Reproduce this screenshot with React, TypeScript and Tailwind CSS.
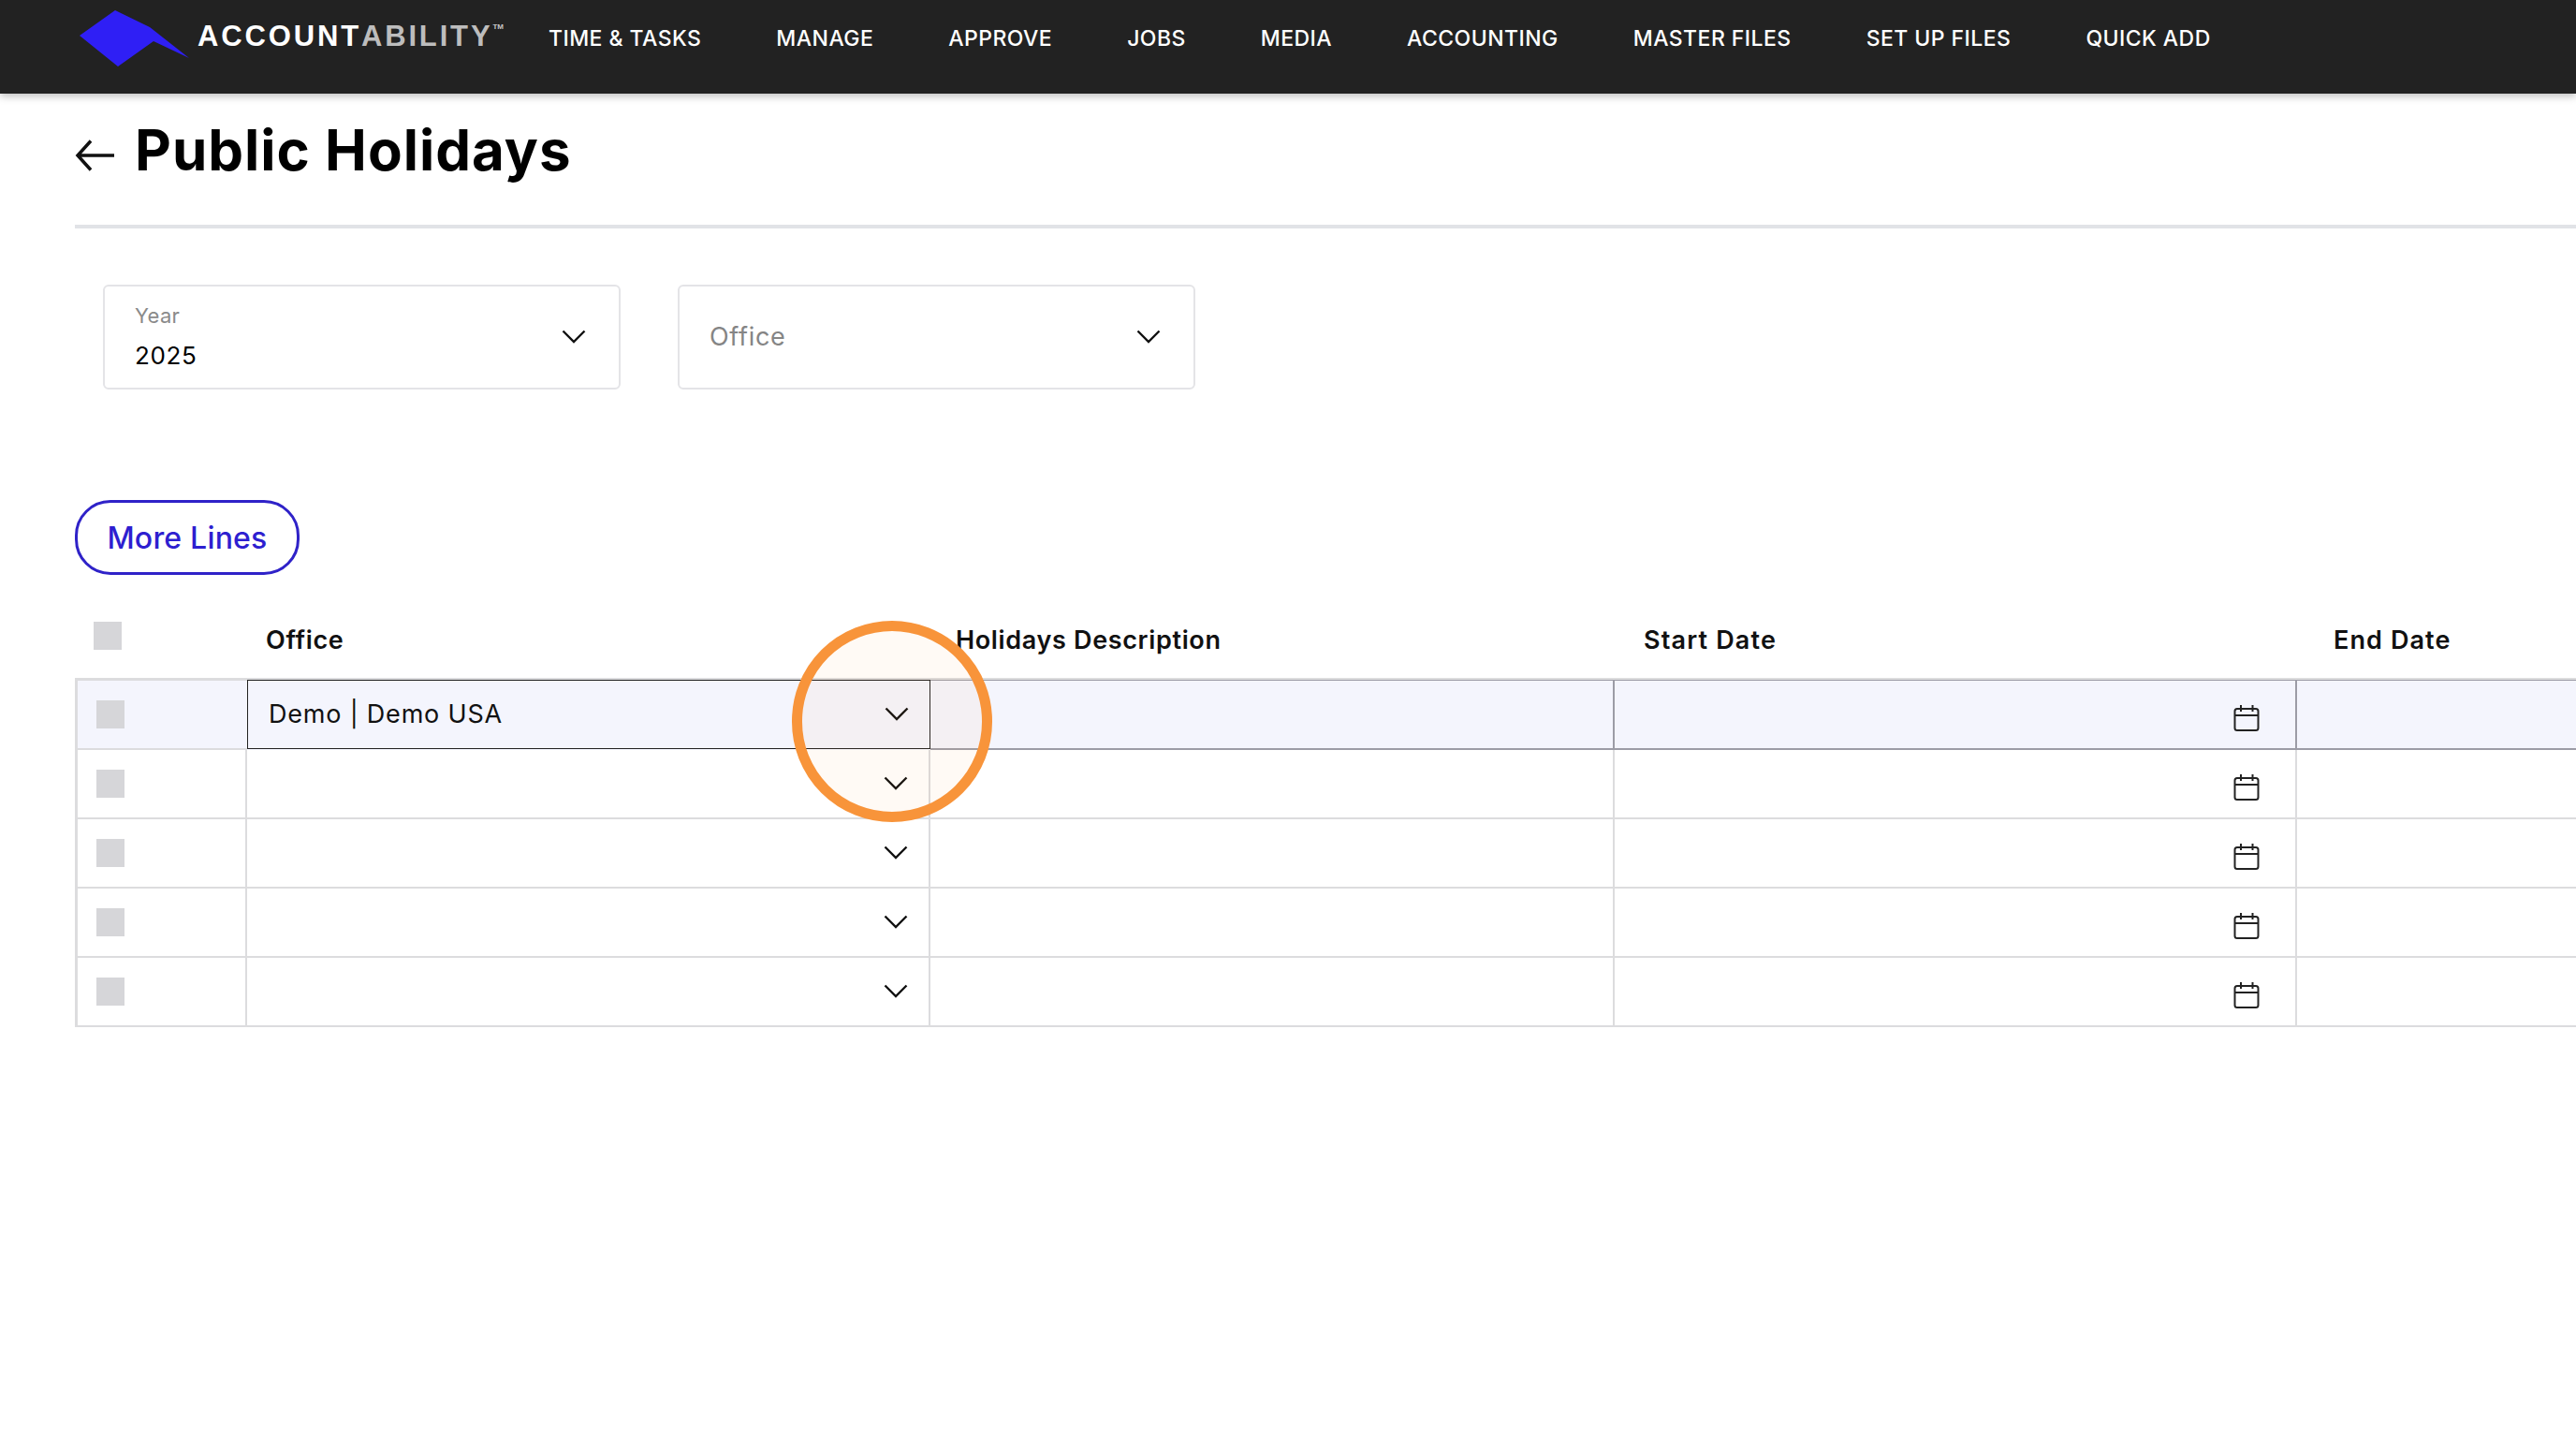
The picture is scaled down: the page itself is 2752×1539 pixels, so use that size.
const navItems = [
  "TIME & TASKS",
  "MANAGE",
  "APPROVE",
  "JOBS",
  "MEDIA",
  "ACCOUNTING",
  "MASTER FILES",
  "SET UP FILES",
  "QUICK ADD",
];

const rows = ["Demo | Demo USA", "", "", "", ""];

function Chevron() {
  return (
    <svg className="-translate-y-px" width="26" height="15" viewBox="0 0 26 15" fill="none" stroke="#111111" strokeWidth="2.4">
      <polyline points="1.5,1.5 13,13 24.5,1.5" />
    </svg>
  );
}

function CalendarIcon() {
  return (
    <svg className="mt-2" width="28" height="28" viewBox="0 0 28 28" fill="none" stroke="#222222" strokeWidth="2">
      <rect x="1.5" y="4" width="25" height="23" rx="2.5" />
      <path d="M1.5 11H26.5M8 0V7M20.500 0V7" />
    </svg>
  );
}

function Select({ label, value }: { label: string; value?: string }) {
  return (
    <div className="flex h-[112px] w-[553px] items-center justify-between rounded-md border-2 border-[#e4e4e7] pl-[32px] pr-[35px]">
      {value ? (
        <div className="-mt-[3px] flex flex-col">
          <span className="text-[22px] leading-[30px] tracking-[0.3px] text-[#8a8a8a]">{label}</span>
          <span className="mt-[12px] text-[26px] leading-[32px] tracking-[0.6px] text-black">{value}</span>
        </div>
      ) : (
        <span className="text-[27px] tracking-[0.7px] text-[#858585]">{label}</span>
      )}
      <Chevron />
    </div>
  );
}

function ActiveRow({ office }: { office: string }) {
  return (
    <div className="grid h-[75px] grid-cols-[181px_730px_731px_729px_400px] bg-[#f4f5fd]">
      <div className="flex items-center border-t border-b-2 border-t-[#dcdcde] border-b-[#dcdcde] pl-[20px]">
        <div className="h-[30px] w-[30px] bg-[#d6d6d9]" />
      </div>
      <div className="mb-px flex items-center justify-between border border-[#222222] pl-[22px] pr-[22px] text-[27px] tracking-[0.8px] text-[#111111]">
        <span>{office}</span>
        <Chevron />
      </div>
      <div className="border-t border-r-2 border-b-2 border-[#9c9ca6]" />
      <div className="flex items-center justify-end border-t border-r-2 border-b-2 border-[#9c9ca6] pr-[38px]">
        <CalendarIcon />
      </div>
      <div className="border-t border-b-2 border-[#9c9ca6]" />
    </div>
  );
}

function EmptyRow() {
  return (
    <div className="grid h-[74px] grid-cols-[181px_730px_731px_729px_400px] border-b-2 border-[#dcdcde]">
      <div className="flex items-center border-r-2 border-[#dcdcde] pl-[20px]">
        <div className="h-[30px] w-[30px] bg-[#d6d6d9]" />
      </div>
      <div className="flex items-center justify-end border-r-2 border-[#dcdcde] pr-[22px]">
        <Chevron />
      </div>
      <div className="border-r-2 border-[#dcdcde]" />
      <div className="flex items-center justify-end border-r-2 border-[#dcdcde] pr-[38px]">
        <CalendarIcon />
      </div>
      <div />
    </div>
  );
}

export default function App() {
  return (
    <div className="relative h-[1539px] w-[2752px] overflow-hidden bg-white font-['Inter',sans-serif]">
      {/* Top bar */}
      <header className="relative z-10 flex h-[100px] items-start bg-[#222222] pl-[85px] shadow-[0_3px_8px_rgba(0,0,0,0.25)]">
        <svg className="mt-[10px]" width="118" height="62" viewBox="0 0 118 62">
          <polygon points="0,28 38,1 75,19 117,52 79,34 41,61" fill="#2f1ff5" />
        </svg>
        <div className="ml-[8px] mt-[20px] flex w-[340px] items-start font-['Liberation_Sans',sans-serif] text-[31px] font-bold leading-[38px] tracking-[2.85px]">
          <span className="text-white">ACCOUNT</span>
          <span className="text-[#bdbdbd]">ABILITY</span>
          <span className="mt-[3px] text-[8px] leading-[12px] tracking-normal text-[#c8c8c8]">TM</span>
        </div>
        <nav className="ml-[35px] mt-[27px] flex gap-[80px] text-[23px] font-medium leading-[28px] tracking-[0.45px] text-white">
          {navItems.map((item) => (
            <span key={item}>{item}</span>
          ))}
        </nav>
      </header>

      <main className="pl-[80px]">
        <div className="flex h-[140px] items-center pb-[20px]">
          <svg className="mt-[12px]" width="42" height="34" viewBox="0 0 42 34" fill="none" stroke="#111111" strokeWidth="3.5">
            <path d="M42 17H3M17 1.500L3 17L17 32.500" />
          </svg>
          <h1 className="ml-[22px] text-[60px] font-bold leading-[72px] tracking-[1px] text-black">Public Holidays</h1>
        </div>
        <div className="h-1 bg-[#e1e3e7]" />

        {/* Filters */}
        <div className="ml-[30px] mt-[60px] flex gap-[61px]">
          <Select label="Year" value="2025" />
          <Select label="Office" />
        </div>

        <button className="mt-[118px] h-[80px] w-[240px] rounded-[38px] border-[3px] border-[#2f22c8] pt-[1px] text-[32px] font-medium tracking-[0.2px] text-[#2e1fd0]">
          More Lines
        </button>

        {/* Table header */}
        <div className="mt-[50px] grid h-[60px] grid-cols-[204px_737px_735px_737px_300px] text-[27px] font-semibold tracking-[0.65px] text-[#111111]">
          <div className="pl-[20px]">
            <div className="h-[30px] w-[30px] bg-[#d6d6d9]" />
          </div>
          <span>Office</span>
          <span>Holidays Description</span>
          <span className="tracking-[1.15px]">Start Date</span>
          <span className="tracking-[1.1px]">End Date</span>
        </div>

        <div className="border-l-[3px] border-t-2 border-[#dcdcde]">
          {rows.map((office, i) =>
            i === 0 ? <ActiveRow key={i} office={office} /> : <EmptyRow key={i} />
          )}
        </div>
      </main>

      {/* Highlight ring over the dropdown */}
      <div className="absolute left-[846px] top-[663px] z-20 h-[215px] w-[214px] rounded-full border-[11px] border-[#f8943a] bg-[#ff963c]/5" />
    </div>
  );
}
